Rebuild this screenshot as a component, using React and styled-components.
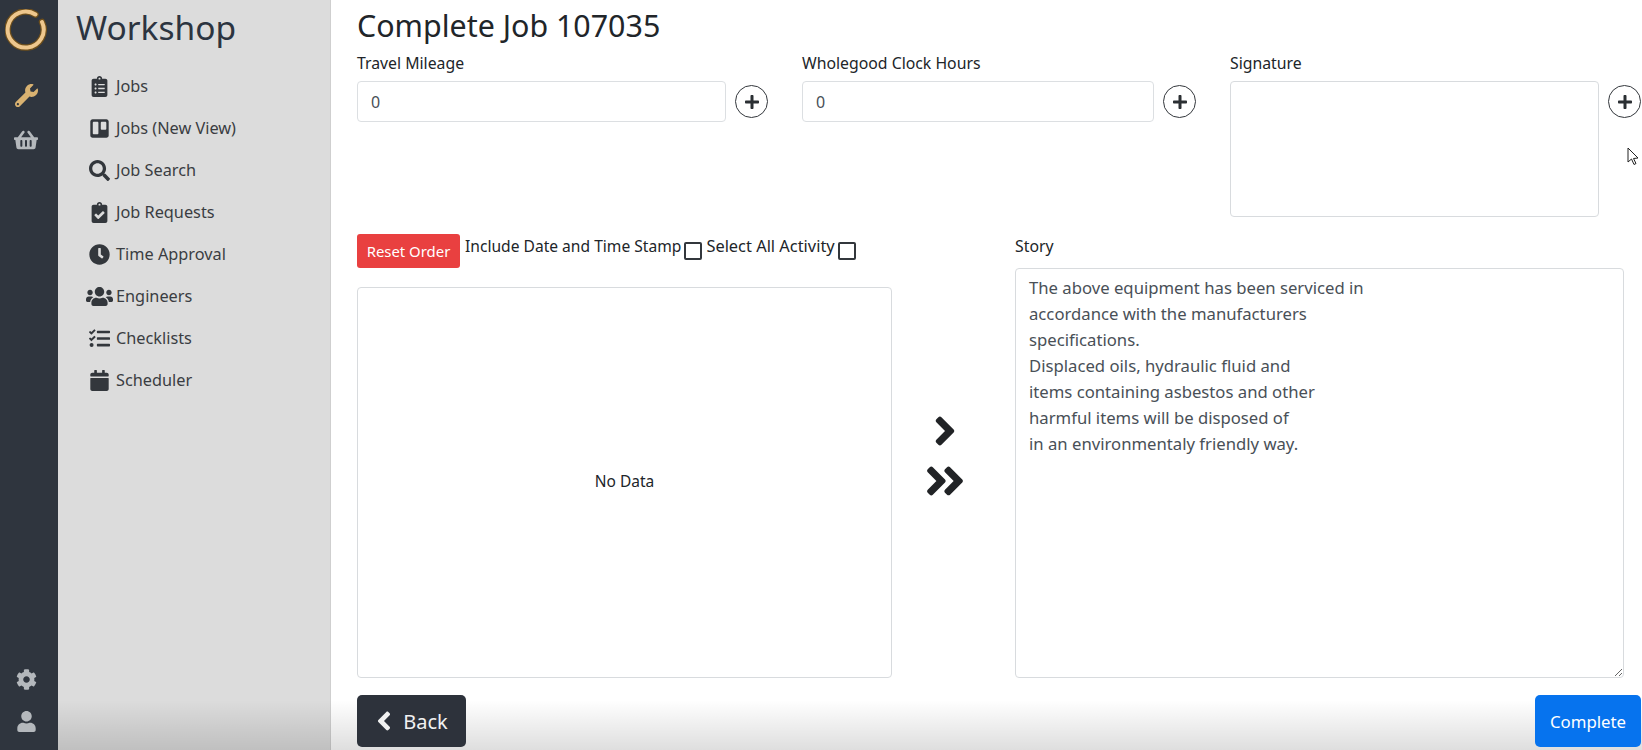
import React from "react";
import styled, { createGlobalStyle } from "styled-components";
import {
  FaAngleDoubleRight,
  FaAngleLeft,
  FaAngleRight,
  FaCalendar,
  FaClipboardCheck,
  FaClipboardList,
  FaClock,
  FaCog,
  FaPlus,
  FaSearch,
  FaShoppingBasket,
  FaTasks,
  FaTrello,
  FaUser,
  FaUsers,
  FaWrench,
} from "react-icons/fa";

const FONT = `"Noto Sans", "Open Sans", sans-serif`;

const GlobalStyle = createGlobalStyle`
  html, body {
    margin: 0;
    height: 100%;
    background: #fff;
    overflow: hidden;
  }
  body {
    font-family: ${FONT};
    color: #212529;
  }
  * {
    box-sizing: border-box;
  }
`;

const Page = styled.div`
  position: relative;
  display: flex;
  height: 750px;
  overflow: hidden;

  &::after {
    content: "";
    position: absolute;
    left: 58px;
    right: 0;
    bottom: 0;
    height: 50px;
    background: linear-gradient(to bottom, rgba(0, 0, 0, 0), rgba(0, 0, 0, 0.13));
    pointer-events: none;
  }
`;

const Rail = styled.aside`
  position: relative;
  z-index: 1;
  flex: 0 0 58px;
  display: flex;
  flex-direction: column;
  align-items: center;
  padding: 9px 6px 18px 0;
  background: #2f353e;
`;

const RailIcon = styled.div`
  display: flex;
  color: ${(p) => p.$color || "#b4b8bc"};
  font-size: ${(p) => p.$size || 22}px;
  margin-top: ${(p) => p.$top || 0}px;
`;

const RailSpacer = styled.div`
  flex: 1;
`;

const Sidebar = styled.nav`
  flex: 0 0 273px;
  background: #dcdcdc;
  border-right: 1px solid #cfcfcf;
  padding: 0 0 0 18px;
`;

const SidebarTitle = styled.h1`
  margin: 5px 0 16px;
  font-size: 33.5px;
  line-height: 44px;
  font-weight: 400;
  color: #2c3440;
`;

const NavItem = styled.a`
  display: flex;
  align-items: center;
  height: 42px;
  color: #3a3d42;
  font-size: 16.3px;
`;

const NavIcon = styled.span`
  flex: 0 0 26px;
  min-width: 0;
  display: flex;
  justify-content: center;
  margin-right: 4px;
  margin-left: 10px;
  font-size: ${(p) => p.$size || 21}px;
  color: #33373c;

  svg {
    flex-shrink: 0;
  }
`;

const Main = styled.main`
  flex: 1;
  min-width: 0;
  padding: 0 1px 0 26px;
  display: flex;
  flex-direction: column;
`;

const Title = styled.h2`
  margin: 0;
  height: 52px;
  font-size: 30.4px;
  line-height: 52px;
  font-weight: 400;
  color: #212529;
`;

const TopRow = styled.div`
  display: grid;
  grid-template-columns: 445px 428px 1fr;
  height: 165px;
`;

const FieldLabel = styled.label`
  display: block;
  height: 29px;
  font-size: 15.8px;
  line-height: 22px;
  color: #212529;
`;

const FieldBody = styled.div`
  display: flex;
  align-items: flex-start;
`;

const TextField = styled.input`
  width: ${(p) => p.$width}px;
  height: 41px;
  padding: 0 13px;
  border: 1px solid #dcdfe2;
  border-radius: 4px;
  background: #fff;
  font-family: ${FONT};
  font-size: 16px;
  color: #495057;
`;

const SignatureBox = styled.div`
  width: 369px;
  height: 136px;
  border: 1px solid #d8dbde;
  border-radius: 4px;
  background: #fff;
`;

const RoundButton = styled.button`
  flex: 0 0 33px;
  width: 33px;
  height: 33px;
  margin: 4px 0 0 ${(p) => p.$gap || 9}px;
  padding: 0;
  display: flex;
  align-items: center;
  justify-content: center;
  border: 1px solid #33373c;
  border-radius: 50%;
  background: #fff;
  color: #2b2f33;
  font-size: 16px;
`;

const Workbench = styled.div`
  display: grid;
  grid-template-columns: 535px 123px 609px;
  height: 444px;
  margin-top: 17px;
`;

const ActivityColumn = styled.section`
  display: flex;
  flex-direction: column;
`;

const Toolbar = styled.div`
  display: flex;
  align-items: flex-start;
  height: 53px;
`;

const ResetButton = styled.button`
  width: 103px;
  height: 34px;
  padding: 0;
  border: 0;
  border-radius: 3px;
  background: #e94040;
  color: #fff;
  font-family: ${FONT};
  font-size: 14.9px;
  margin-right: 5px;
`;

const CheckLabel = styled.span`
  font-size: ${(p) => p.$size}px;
  line-height: 24px;
  color: #212529;
`;

const CheckBox = styled.span`
  flex: 0 0 18px;
  width: 18px;
  height: 18px;
  margin: 8px 4px 0 3px;
  border: 2px solid #33373c;
  border-radius: 2px;
  background: #fff;
`;

const ActivityList = styled.div`
  flex: 1;
  display: flex;
  align-items: center;
  justify-content: center;
  padding-bottom: 4px;
  border: 1px solid #d8dbde;
  border-radius: 4px;
  font-size: 15.5px;
  color: #212529;
`;

const MoveColumn = styled.div`
  display: flex;
  flex-direction: column;
  align-items: center;
  justify-content: center;
  gap: 4px;
  padding-right: 17px;
  color: #212326;
`;

const MoveIcon = styled.div`
  display: flex;
  font-size: ${(p) => p.$size}px;
`;

const StoryColumn = styled.section`
  display: flex;
  flex-direction: column;
`;

const StoryLabel = styled.label`
  height: 34px;
  padding-top: 1px;
  font-size: 15.8px;
  line-height: 22px;
  color: #212529;
`;

const StoryText = styled.textarea`
  flex: 1;
  width: 100%;
  padding: 6px 13px;
  border: 1px solid #d8dbde;
  border-radius: 4px;
  font-family: ${FONT};
  font-size: 16.7px;
  line-height: 26px;
  color: #495057;
  overflow: hidden;
  outline: none;
`;

const Actions = styled.div`
  position: relative;
  z-index: 1;
  display: flex;
  justify-content: space-between;
  margin-top: 17px;
`;

const BackButton = styled.button`
  width: 109px;
  height: 52px;
  display: flex;
  align-items: center;
  justify-content: center;
  gap: 4px;
  border: 0;
  border-radius: 5px;
  background: #2d323b;
  color: #f1f1f1;
  font-family: ${FONT};
  font-size: 20px;
  padding: 0 6px 0 0;
`;

const BackIcon = styled.span`
  display: flex;
  font-size: 30px;
`;

const CompleteButton = styled.button`
  width: 106px;
  height: 52px;
  border: 0;
  border-radius: 5px;
  background: #0673ee;
  color: #fff;
  font-family: ${FONT};
  font-size: 16.8px;
  padding: 0;
`;

const Pointer = styled.svg`
  position: absolute;
  left: 1627px;
  top: 147px;
  z-index: 2;
`;

const NAV_ITEMS = [
  { label: "Jobs", icon: <FaClipboardList /> },
  { label: "Jobs (New View)", icon: <FaTrello /> },
  { label: "Job Search", icon: <FaSearch /> },
  { label: "Job Requests", icon: <FaClipboardCheck /> },
  { label: "Time Approval", icon: <FaClock /> },
  { label: "Engineers", icon: <FaUsers />, size: 27 },
  { label: "Checklists", icon: <FaTasks /> },
  { label: "Scheduler", icon: <FaCalendar /> },
];

const STORY = `The above equipment has been serviced in
accordance with the manufacturers
specifications.
Displaced oils, hydraulic fluid and
items containing asbestos and other
harmful items will be disposed of
in an environmentaly friendly way.`;

const RING = "M30.5 5.5 A18 18 0 1 0 37 13";

const Logo = () => (
  <svg width="42" height="42" viewBox="0 0 42 42" fill="none">
    <path d={RING} stroke="#6e4f1c" strokeWidth="6.5" strokeLinecap="round" />
    <path d={RING} stroke="#eec78d" strokeWidth="4" strokeLinecap="round" />
  </svg>
);

const App = () => {
  return (
    <Page>
      <GlobalStyle />
      <Rail>
        <Logo />
        <RailIcon $color="#d9b271" $size={23} $top={33}>
          <FaWrench />
        </RailIcon>
        <RailIcon $size={24} $top={21}>
          <FaShoppingBasket />
        </RailIcon>
        <RailSpacer />
        <RailIcon $size={21}>
          <FaCog />
        </RailIcon>
        <RailIcon $size={21} $top={21}>
          <FaUser />
        </RailIcon>
      </Rail>

      <Sidebar>
        <SidebarTitle>Workshop</SidebarTitle>
        {NAV_ITEMS.map((item) => (
          <NavItem key={item.label}>
            <NavIcon $size={item.size}>{item.icon}</NavIcon>
            {item.label}
          </NavItem>
        ))}
      </Sidebar>

      <Main>
        <Title>Complete Job 107035</Title>
        <TopRow>
          <div>
            <FieldLabel>Travel Mileage</FieldLabel>
            <FieldBody>
              <TextField $width={369} defaultValue="0" />
              <RoundButton>
                <FaPlus />
              </RoundButton>
            </FieldBody>
          </div>
          <div>
            <FieldLabel>Wholegood Clock Hours</FieldLabel>
            <FieldBody>
              <TextField $width={352} defaultValue="0" />
              <RoundButton>
                <FaPlus />
              </RoundButton>
            </FieldBody>
          </div>
          <div>
            <FieldLabel>Signature</FieldLabel>
            <FieldBody>
              <SignatureBox />
              <RoundButton>
                <FaPlus />
              </RoundButton>
            </FieldBody>
          </div>
        </TopRow>

        <Workbench>
          <ActivityColumn>
            <Toolbar>
              <ResetButton>Reset Order</ResetButton>
              <CheckLabel $size={15.6}>Include Date and Time Stamp</CheckLabel>
              <CheckBox />
              <CheckLabel $size={16.4}>Select All Activity</CheckLabel>
              <CheckBox />
            </Toolbar>
            <ActivityList>No Data</ActivityList>
          </ActivityColumn>
          <MoveColumn>
            <MoveIcon $size={46}>
              <FaAngleRight />
            </MoveIcon>
            <MoveIcon $size={46}>
              <FaAngleDoubleRight />
            </MoveIcon>
          </MoveColumn>
          <StoryColumn>
            <StoryLabel>Story</StoryLabel>
            <StoryText defaultValue={STORY} />
          </StoryColumn>
        </Workbench>

        <Actions>
          <BackButton>
            <BackIcon>
              <FaAngleLeft />
            </BackIcon>
            Back
          </BackButton>
          <CompleteButton>Complete</CompleteButton>
        </Actions>
      </Main>

      <Pointer width="12" height="19" viewBox="0 0 12 19">
        <path
          d="M1 1 L1 15 L4.5 12 L7 17.5 L9 16.5 L6.5 11.5 L11 11 Z"
          fill="#fff"
          stroke="#222"
          strokeWidth="1"
        />
      </Pointer>
    </Page>
  );
};

export default App;
